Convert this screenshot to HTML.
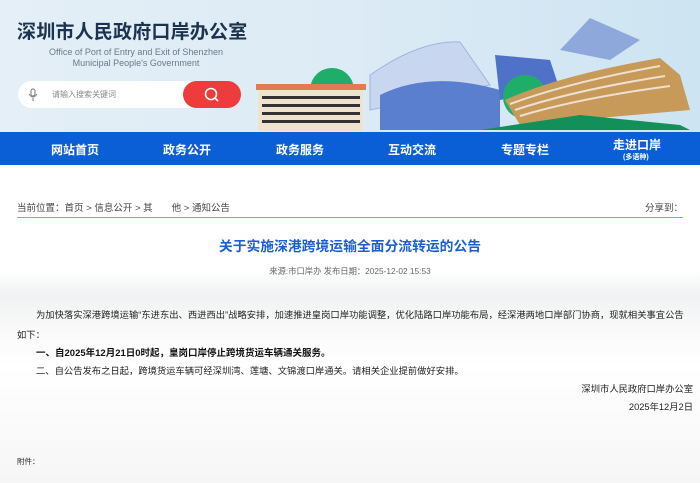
<!DOCTYPE html>
<html><head><meta charset="utf-8"><style>
*{margin:0;padding:0;box-sizing:border-box}
body{width:700px;height:483px;overflow:hidden;background:#fff;font-family:"Liberation Sans","Noto Sans CJK SC",sans-serif;position:relative;color:#333}
.hdr{position:absolute;left:0;top:0;width:700px;height:132px;background:linear-gradient(90deg,#e4eff7 0%,#dcebf5 50%,#cde4f2 100%)}
.t1{position:absolute;left:17px;top:21px;font-size:19px;line-height:24px;font-weight:bold;color:#1c3350;letter-spacing:0.2px}
.t2{position:absolute;left:28px;top:47px;font-size:9px;color:#6a7a8a;line-height:11px;text-align:center;width:216px}
.search{position:absolute;left:18px;top:81px;width:222px;height:27px;border-radius:14px;background:#fff}
.search span{position:absolute;left:34px;top:8px;font-size:8px;color:#888}
.sbtn{position:absolute;left:183px;top:81px;width:58px;height:27px;border-radius:14px;background:#ee3b3b}
.nav{position:absolute;left:0;top:132px;width:700px;height:33px;background:#0a5fd6}
.nav div{position:absolute;top:9px;font-size:12px;font-weight:bold;color:#fff}
.bc{position:absolute;left:17px;top:200px;font-size:9.5px;color:#444}
.share{position:absolute;right:17px;top:200px;font-size:9.5px;color:#444}
.line{position:absolute;left:17px;top:217px;width:666px;height:1px;background:#7ea4dc}
.title{position:absolute;left:0;width:700px;top:235px;text-align:center;font-size:13.8px;font-weight:bold;color:#1a5fd0}
.src{position:absolute;left:0;width:700px;top:265px;text-align:center;font-size:8.3px;color:#666}
.p{position:absolute;font-size:9.3px;color:#222;white-space:nowrap}
.bg{position:absolute;left:0;top:270px;width:700px;height:213px;background:linear-gradient(180deg,#fff 0%,#f1f2f3 12%,#fafafa 30%,#fff 45%,#f6f6f6 100%)}
</style></head><body>
<div class="hdr">
<svg width="700" height="132" style="position:absolute;left:0;top:0">
<polygon points="590,18 640,40 610,60 560,50" fill="#8ea8dc"/>
<path d="M370,75 Q420,40 460,42 L490,85 L370,110Z" fill="#c9d6f0" stroke="#9fb3e0"/>
<path d="M380,95 Q430,70 500,90 L500,130 L380,130Z" fill="#5a7fcf"/>
<polygon points="495,55 550,60 560,90 500,100" fill="#4f72c8"/>
<circle cx="525" cy="97" r="22" fill="#1fae6a"/>
<circle cx="332" cy="90" r="22" fill="#1fae6a"/>
<path d="M505,100 Q560,75 660,58 L680,75 L690,110 L520,125Z" fill="#c79a5a"/>
<path d="M510,104 Q570,82 660,66 M515,110 Q575,90 665,76 M520,116 Q580,98 670,86" stroke="#eee0d0" stroke-width="2" fill="none"/>
<polygon points="480,130 580,115 680,125 690,130" fill="#13905a"/>
<rect x="258" y="85" width="105" height="46" fill="#efe3cf"/>
<rect x="256" y="84" width="110" height="6" fill="#e47a55"/>
<rect x="262" y="96" width="98" height="3" fill="#333"/>
<rect x="262" y="104" width="98" height="3" fill="#333"/>
<rect x="262" y="112" width="98" height="3" fill="#333"/>
<rect x="262" y="120" width="98" height="3" fill="#333"/>
</svg>
<div class="t1">深圳市人民政府口岸办公室</div>
<div class="t2">Office of Port of Entry and Exit of Shenzhen<br>Municipal People's Government</div>
<div class="search"><svg width="10" height="14" style="position:absolute;left:10px;top:7px"><rect x="3" y="1" width="4" height="7" rx="2" fill="none" stroke="#777"/><path d="M1,6 Q5,12 9,6 M5,10 V13" stroke="#777" fill="none"/></svg><span>请输入搜索关键词</span></div>
<div class="sbtn"><svg width="16" height="16" style="position:absolute;left:21px;top:6px"><circle cx="7" cy="7" r="5.5" fill="none" stroke="#fff" stroke-width="1.6"/><path d="M11,11 L14,14" stroke="#fff" stroke-width="1.6"/></svg></div>
</div>
<div class="nav">
<div style="left:51px">网站首页</div>
<div style="left:163px">政务公开</div>
<div style="left:276px">政务服务</div>
<div style="left:388px">互动交流</div>
<div style="left:501px">专题专栏</div>
<div style="left:613px;top:4px">走进口岸</div>
<div style="left:623px;top:20px;font-size:7px">(多语种)</div>
</div>
<div class="bg"></div>
<div class="bc">当前位置：首页 &gt; 信息公开 &gt; 其　　他 &gt; 通知公告</div>
<div class="share">分享到：</div>
<div class="line"></div>
<div class="title">关于实施深港跨境运输全面分流转运的公告</div>
<div class="src">来源:市口岸办 发布日期：2025-12-02 15:53</div>
<div class="p" style="left:36px;top:307px">为加快落实深港跨境运输“东进东出、西进西出”战略安排，加速推进皇岗口岸功能调整，优化陆路口岸功能布局，经深港两地口岸部门协商，现就相关事宜公告</div>
<div class="p" style="left:17px;top:327px">如下：</div>
<div class="p" style="left:36px;top:345px;font-weight:bold;color:#111;font-size:9.5px">一、自2025年12月21日0时起，皇岗口岸停止跨境货运车辆通关服务。</div>
<div class="p" style="left:36px;top:363px">二、自公告发布之日起，跨境货运车辆可经深圳湾、莲塘、文锦渡口岸通关。请相关企业提前做好安排。</div>
<div class="p" style="right:7px;top:381px">深圳市人民政府口岸办公室</div>
<div class="p" style="right:7px;top:399px">2025年12月2日</div>
<div class="p" style="left:17px;top:456px;font-size:7.5px">附件：</div>
</body></html>
